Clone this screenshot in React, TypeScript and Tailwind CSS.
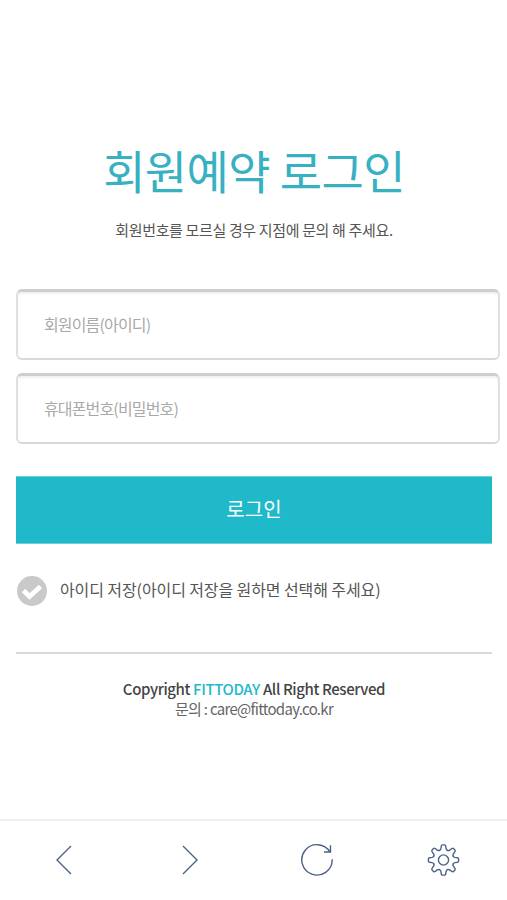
import { useState } from "react";

const teeth = [0, 45, 90, 135, 180, 225, 270, 315];

function Field({ placeholder, label, type = "text" }: { placeholder: string; label: string; type?: string }) {
  return (
    <input
      type={type}
      aria-label={label}
      placeholder={placeholder}
      className="block h-[71px] w-[484px] rounded-[6px] border-x-2 border-b-2 border-t-[3px] border-x-[#e0e0e0] border-b-[#d8d8d8] border-t-[#cecece] bg-white px-[26px] pb-[3px] text-[16px] tracking-[-0.85px] text-[#555] shadow-[inset_0_2px_2px_#f1f1f1] outline-none placeholder:text-[#a9a9a9] placeholder:opacity-100"
    />
  );
}

export default function App() {
  const [saveId, setSaveId] = useState(false);
  return (
    <div className="flex h-[900px] w-[507px] flex-col overflow-hidden bg-white font-['Noto_Sans_CJK_KR',sans-serif] text-[#555]">
      <main className="flex-1 pl-4 pt-[133px]">
        <header className="w-[476px] text-center">
          <h1 className="h-[72px] whitespace-nowrap text-[46px] font-normal leading-[72px] tracking-[-0.6px] text-[#37b1c2]">회원예약 로그인</h1>
          <p className="mt-[13px] h-6 whitespace-nowrap text-[15px] leading-6 tracking-[-0.35px] text-[#555]">회원번호를 모르실 경우 지점에 문의 해 주세요.</p>
        </header>
        <form className="mt-[47px]" onSubmit={(e) => e.preventDefault()}>
          <div className="flex flex-col gap-[13px]">
            <Field label="회원이름" placeholder="회원이름(아이디)" />
            <Field label="휴대폰번호" placeholder="휴대폰번호(비밀번호)" />
          </div>
          <button className="mt-8 block h-[68px] w-[476px] border-y border-[#6fd0da] bg-[#1fb9ca] pb-0.5 text-[20px] tracking-[0.1px] text-white">로그인</button>
          <button type="button" aria-pressed={saveId} onClick={() => setSaveId(!saveId)} className="mt-[31px] flex h-8 items-center gap-[13px] whitespace-nowrap text-[16px] tracking-[-0.1px] text-[#555]">
            <svg width="31" height="31" viewBox="0 0 31 31" fill="none">
              <circle cx="16" cy="15" r="15" fill={saveId ? "#1fb9ca" : "#c9c9c9"} />
              <path d="M7.5 14.5l6 6L24.5 10.5" stroke="white" strokeWidth="4.8" />
            </svg>
            <span className="pb-1">아이디 저장(아이디 저장을 원하면 선택해 주세요)</span>
          </button>
        </form>
        <footer className="mt-[45px] w-[476px] border-t-2 border-[#d9d9d9] pt-6 text-center text-[15px] leading-[21px]">
          <p className="font-medium tracking-[-0.4px] text-[#444]">Copyright <span className="text-[#22b9ca]">FITTODAY</span> All Right Reserved</p>
          <p className="-mt-px tracking-[-0.7px] text-[#666]">문의 : care@fittoday.co.kr</p>
        </footer>
      </main>
      <nav className="flex h-[81px] border-t-2 border-[#f1f1f1] pb-px text-[#4b6188]">
        <button aria-label="Back" className="flex flex-1 items-center justify-center">
          <svg width="32" height="32" viewBox="0 0 32 32" fill="none" stroke="currentColor" strokeWidth="1.4"><path d="M24 2L10 16l14 14" /></svg>
        </button>
        <button aria-label="Forward" className="flex flex-1 items-center justify-center">
          <svg width="32" height="32" viewBox="0 0 32 32" fill="none" stroke="currentColor" strokeWidth="1.4"><path d="M9 2l14 14L9 30" /></svg>
        </button>
        <button aria-label="Refresh" className="flex flex-1 items-center justify-center">
          <svg width="34" height="34" viewBox="-17 -17 34 34" fill="none" stroke="currentColor" strokeWidth="1.4">
            <path d="M15.2-.8V0A15.2 15.2 0 1 1 13-8M13.5-14.8V-8H7" />
          </svg>
        </button>
        <button aria-label="Settings" className="flex flex-1 items-center justify-center">
          <svg width="34" height="34" viewBox="-16.5 -17 34 34" fill="none" stroke="currentColor" strokeWidth="1.4" strokeLinecap="round">
            {teeth.map((angle) => (
              <path key={angle} transform={`rotate(${angle})`} d="M-3.98-9.6Q-2.9-10.1-2.6-11.4L-2.2-14Q-2-15.1-1-15.1H1Q2-15.1 2.2-14L2.6-11.4Q2.9-10.1 3.98-9.6" />
            ))}
            <circle r="5.1" />
          </svg>
        </button>
      </nav>
    </div>
  );
}
